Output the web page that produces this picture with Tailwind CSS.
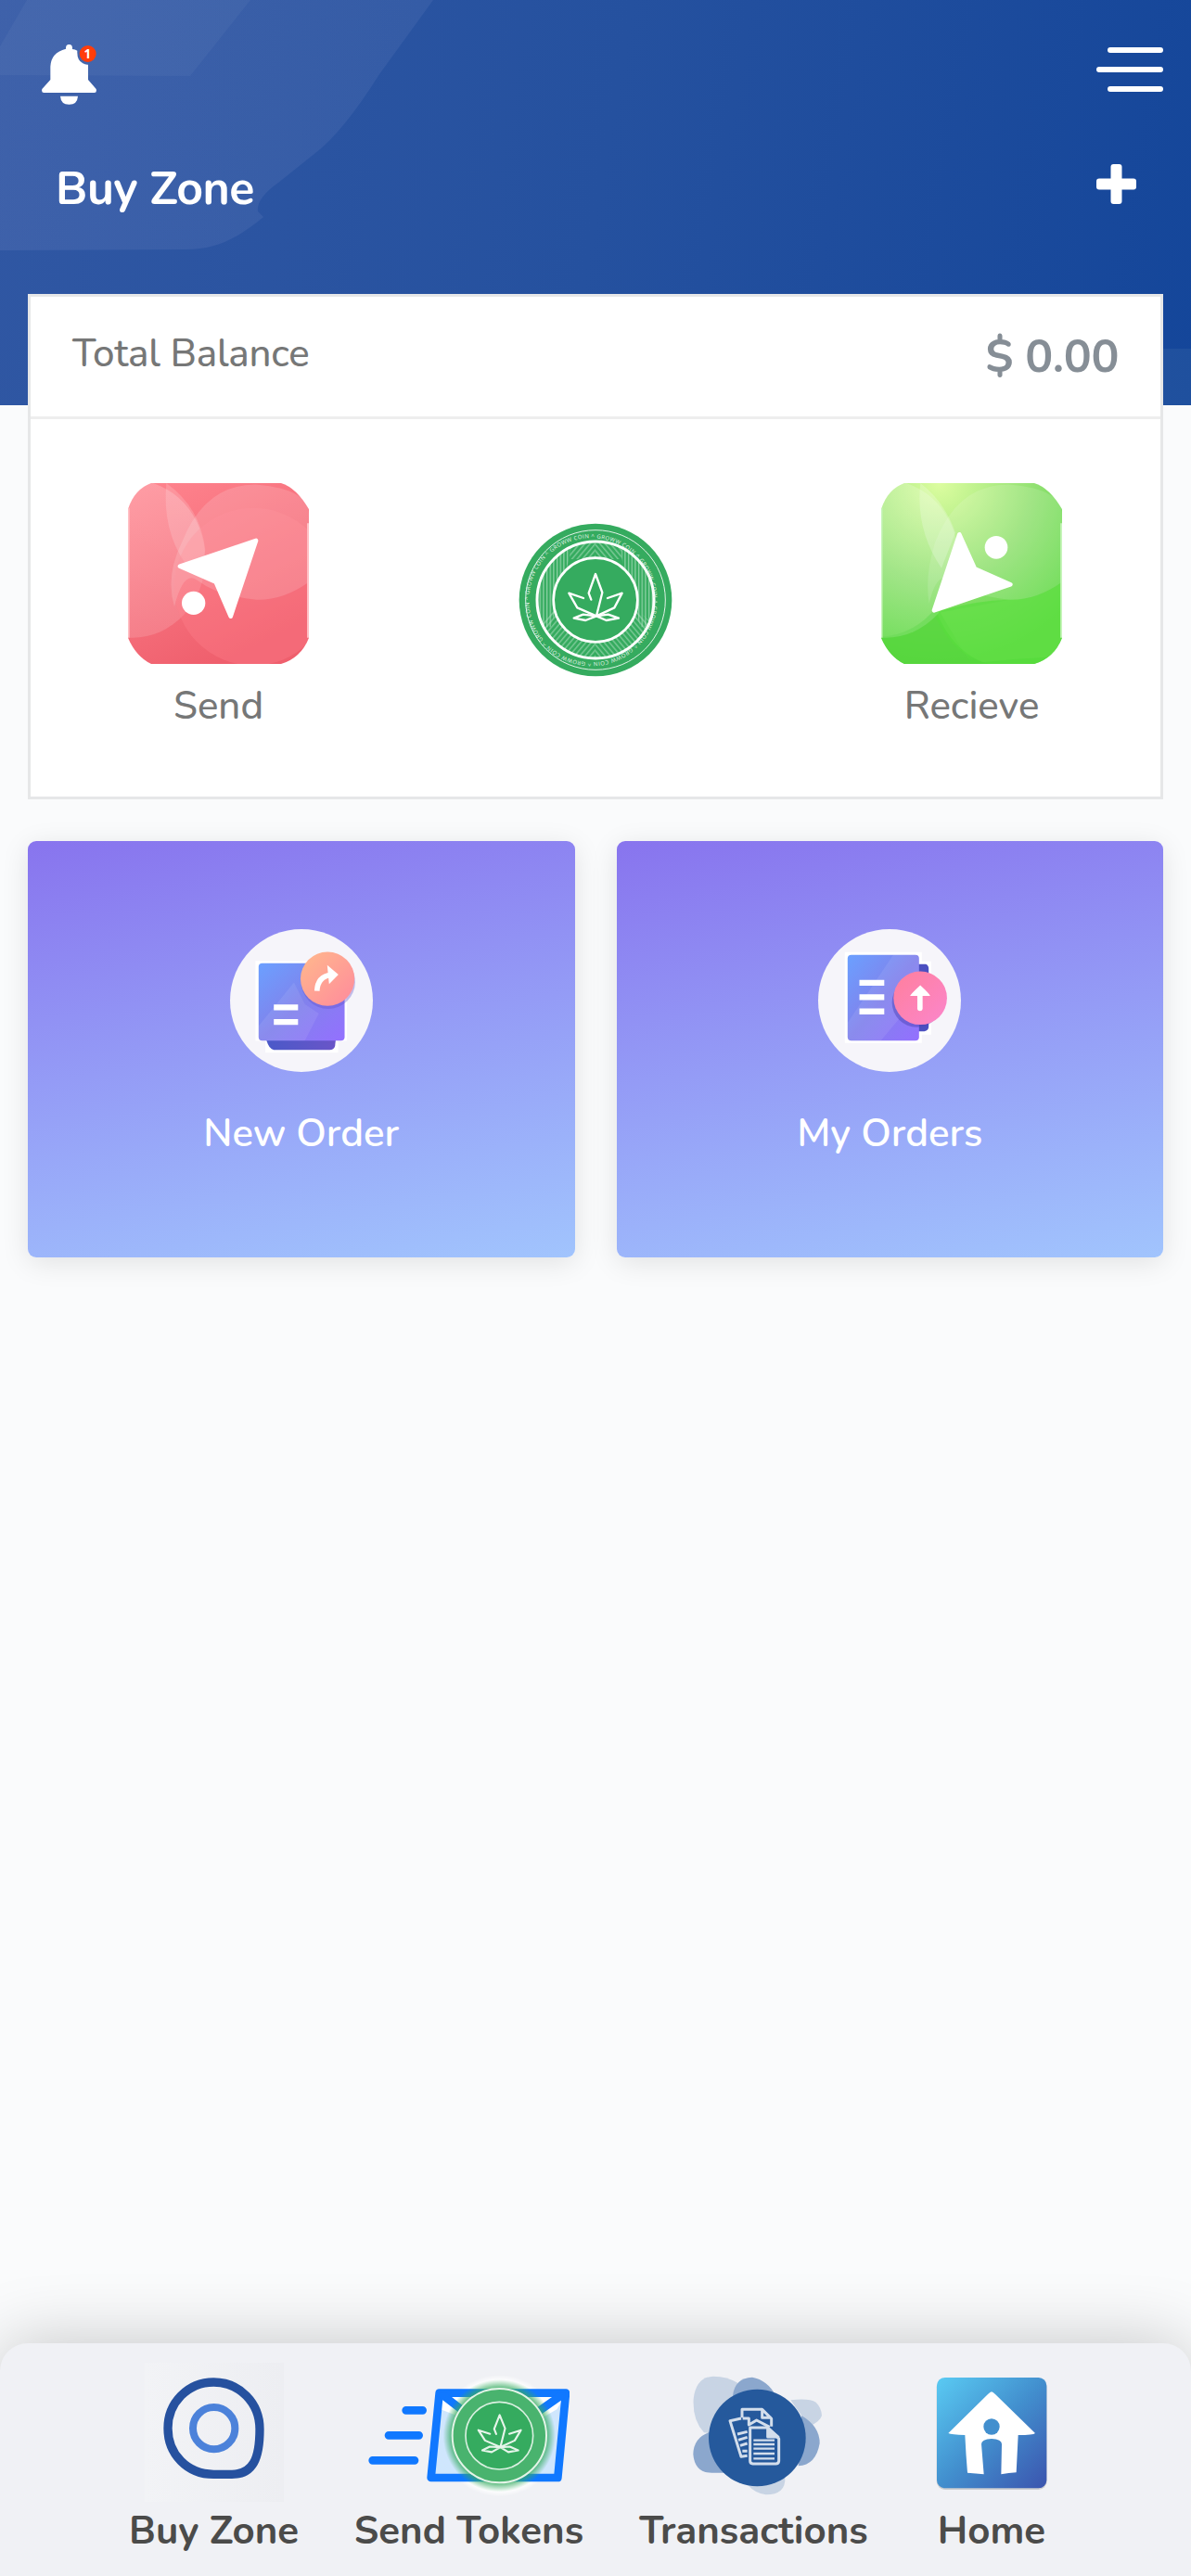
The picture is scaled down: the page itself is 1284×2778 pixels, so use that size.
<!DOCTYPE html>
<html lang="en">
<head>
    <meta charset="UTF-8">
    <meta name="viewport" content="width=device-width, initial-scale=1.0">
    <script src="https://cdn.jsdelivr.net/npm/@tailwindcss/browser@4"></script>
    <title>Buy Zone</title>
</head>
<body class="bg-[#fafbfc] font-['Nunito','Lato',sans-serif]">
<div class="w-[1284px] h-[2778px] flex flex-col overflow-hidden">

    <!-- Header -->
    <header class="relative h-[437px] shrink-0 bg-linear-100 from-[#3057a3] via-[#25519f] to-[#14469a]">
        <svg class="absolute inset-0" width="1284" height="437" viewBox="0 0 1284 437" fill="none">
            <defs>
                <linearGradient id="shape" x1="0" y1="0" x2="1" y2="0">
                    <stop offset="0" stop-color="#e4d8ff" stop-opacity=".08"/>
                    <stop offset="1" stop-color="#f0e8ff" stop-opacity=".06"/>
                </linearGradient>
            </defs>
            <path d="M0 0H467L409 80Q370 142 340 165L300 197Q276 214 278 228L284 234C255 258 232 269 200 269L0 270Z" fill="url(#shape)"/>
            <path d="M29 0H270L205 82L0 81V50Z" fill="#fff" fill-opacity=".04"/>
            <path d="M1150 376H1284V437H1150Z" fill="#3c6aa8" fill-opacity=".3"/>
        </svg>
        <div class="relative flex justify-between items-start pt-[48px] pl-[45px] pr-[30px]">
            <svg width="59" height="65" viewBox="75 54 177 195">
                <path fill="#fff" d="M153 68V64a10.500 10.500 0 0 1 21 0V69Q183 70 190 74Q188 105 208 115Q216 120 225 119V168L251 198Q254 210 245 210H82Q73 210 76 198L103 168V125Q105 80 153 68Z"/>
                <path fill="#fff" d="M135 221H192Q190 248 163.500 248.500Q137 248 135 221Z"/>
                <circle cx="224" cy="84" r="27" fill="#ff3d0a"/>
                <text x="223" y="98" text-anchor="middle" font-size="40" font-weight="700" fill="#fff" font-family="Open Sans">1</text>
            </svg>
            <div class="flex flex-col items-end gap-[15px] pt-[3px]">
                <span class="block w-[60px] h-[6px] rounded-full bg-white"></span>
                <span class="block w-[72px] h-[6px] rounded-full bg-white"></span>
                <span class="block w-[60px] h-[6px] rounded-full bg-white"></span>
            </div>
        </div>
        <div class="relative flex justify-between items-start pt-[60px] pl-[60px] pr-[59px]">
            <h1 class="mt-[1px] text-[50px] leading-[60px] tracking-[-0.5px] font-bold text-white whitespace-nowrap">Buy Zone</h1>
            <svg class="mt-[4px]" width="43" height="43" viewBox="0 0 43 43" fill="#fff">
                <rect x="15.500" width="12" height="43" rx="3"/>
                <rect y="15.500" width="43" height="12" rx="3"/>
            </svg>
        </div>
    </header>

    <!-- Balance -->
    <section class="relative -mt-[120px] mx-[30px] h-[545px] shrink-0 bg-white border-3 border-[#e6e7e8]">
        <div class="h-[132px] flex justify-between items-center px-[45px] border-b-3 border-[#eeeeee]">
            <span class="text-[42px] leading-[60px] tracking-[-0.2px] text-[#767777] font-medium -mt-[6px]">Total Balance</span>
            <span class="text-[50px] leading-[60px] tracking-[-0.4px] text-[#868e96] font-bold">$ 0.00</span>
        </div>
        <div class="flex justify-between items-start pl-[105px] pr-[106px] pt-[69px]">
            <div class="w-[195px] flex flex-col items-center">
                <svg width="195" height="195" viewBox="0 0 585 585">
                    <defs>
                        <clipPath id="tile"><path d="M75 0H495Q545 15 585 85V500Q560 565 495 585H75Q25 560 0 500V85Q20 20 75 0Z"/></clipPath>
                        <linearGradient id="pink" x1="0" y1="0" x2=".5" y2="1">
                            <stop offset="0" stop-color="#ff858f"/>
                            <stop offset="1" stop-color="#ef5f6d"/>
                        </linearGradient>
                        <linearGradient id="tint" x1="0" y1="0" x2="0" y2="1">
                            <stop offset="0" stop-color="#fff" stop-opacity=".2"/>
                            <stop offset="1" stop-color="#fff" stop-opacity=".14"/>
                        </linearGradient>
                    </defs>
                    <g clip-path="url(#tile)">
                        <rect width="585" height="585" fill="url(#pink)"/>
                        <ellipse cx="15" cy="245" rx="235" ry="255" fill="url(#tint)"/>
                        <path d="M124 0Q235 80 250 215Q240 275 185 260Q110 150 124 0Z" fill="#fff" fill-opacity=".16"/>
                        <circle cx="405" cy="335" r="255" fill="#ff828c" fill-opacity=".35"/>
                        <path d="M175 190Q250 0 420 5Q585 20 585 100V320Q500 380 415 377Q290 365 225 315Q180 280 150 400Q120 300 175 190Z" fill="#fff" fill-opacity=".15"/>
                        <path d="M0 80V500M584 130V500" stroke="#ffc0c5" stroke-width="10"/>
                    </g>
                    <path d="M168 269L414 186L332 431L284 320Z" fill="#fff" stroke="#fff" stroke-width="14" stroke-linejoin="round"/>
                    <circle cx="212" cy="388" r="38" fill="#fff"/>
                </svg>
                <span class="text-[42px] leading-[60px] mt-[16px] text-[#767777] font-medium">Send</span>
            </div>
            <svg class="mt-[43px]" width="166" height="166" viewBox="56 43 498 498" fill="none">
                <defs>
                    <pattern id="vlines" width="11" height="20" patternUnits="userSpaceOnUse"><path d="M5 0V20" stroke="#c4e8d0" stroke-width="2.500"/></pattern>
                    <pattern id="llines" width="13" height="20" patternUnits="userSpaceOnUse" patternTransform="rotate(40)"><path d="M5 0V20" stroke="#b4e0c3" stroke-width="2.500"/></pattern>
                    <pattern id="rlines" width="13" height="20" patternUnits="userSpaceOnUse" patternTransform="rotate(-40)"><path d="M5 0V20" stroke="#b4e0c3" stroke-width="2.500"/></pattern>
                    <clipPath id="band"><path clip-rule="evenodd" d="M112 292a193 193 0 1 0 386 0a193 193 0 1 0 -386 0ZM166 292a139 139 0 1 0 278 0a139 139 0 1 0 -278 0Z"/></clipPath>
                    <path id="rim" d="M291 91.500A201 201 0 1 1 290.900 91.500"/>
                </defs>
                <circle cx="305" cy="292" r="247" fill="#35ab5f"/>
                <g clip-path="url(#band)">
                    <path d="M110 90H222V150L160 380H110Z" fill="url(#vlines)"/>
                    <path d="M500 90H388V150L450 380H500Z" fill="url(#vlines)"/>
                    <path d="M222 90H305V160H222Z" fill="url(#llines)"/>
                    <path d="M388 90H305V160H388Z" fill="url(#rlines)"/>
                    <path d="M120 370L175 320L305 430V490H120Z" fill="url(#llines)"/>
                    <path d="M490 370L435 320L305 430V490H490Z" fill="url(#rlines)"/>
                </g>
                <circle cx="305" cy="292" r="226" stroke="#e2f3e8" stroke-width="3"/>
                <circle cx="305" cy="292" r="189" stroke="#fff" stroke-width="9"/>
                <circle cx="305" cy="292" r="136" fill="#35ab5f" stroke="#fff" stroke-width="8"/>
                <text font-family="Open Sans" font-size="18" fill="#e8f6ec"><textPath href="#rim" textLength="1255">^ GROWW COIN ^ GROWW COIN ^ GROWW COIN ^ GROWW COIN ^ GROWW COIN ^ GROWW COIN ^ GROWW COIN ^ GROWW COIN </textPath></text>
                <g stroke="#fff" stroke-width="7" stroke-linejoin="round" stroke-linecap="round">
                    <path d="M291 291L283 270L305 208L327 268L308 344L246 317L219 270L266 286M308 344L366 317L391 270L344 286"/>
                    <path d="M308 344L265 339L235 351L273 358L308 344L346 339L380 351L340 358L308 344"/>
                </g>
            </svg>
            <div class="w-[195px] flex flex-col items-center">
                <svg width="195" height="195" viewBox="0 0 585 585">
                    <defs>
                        <radialGradient id="lime" cx=".32" cy="0" r="1">
                            <stop offset="0" stop-color="#dcfda0"/>
                            <stop offset=".55" stop-color="#8fe070"/>
                            <stop offset="1" stop-color="#55d83c"/>
                        </radialGradient>
                    </defs>
                    <g clip-path="url(#tile)">
                        <rect width="585" height="585" fill="url(#lime)"/>
                        <path d="M0 498Q110 490 180 400L290 585H0Z" fill="#57d63e" fill-opacity=".8"/>
                        <path d="M170 420Q230 560 350 585H585V320Q500 380 415 377Q290 380 170 420Z" fill="#58dd3d" fill-opacity=".7"/>
                        <path d="M180 420Q230 540 330 580Q400 570 585 560V320Q500 380 415 377Z" fill="#8be86c" fill-opacity=".15"/>
                        <ellipse cx="15" cy="245" rx="235" ry="255" fill="url(#tint)"/>
                        <path d="M127 0Q205 60 240 160L195 275Q110 150 127 0Z" fill="#fff" fill-opacity=".22"/>
                        <path d="M175 190Q250 0 420 5Q585 20 585 100V320Q500 380 415 377Q290 365 225 315Q180 280 155 390Q140 300 175 190Z" fill="#fff" fill-opacity=".13"/>
                        <path d="M0 80V500M584 130V500" stroke="#c7f5bb" stroke-width="9"/>
                    </g>
                    <path d="M253 166L303 277L418 328L171 412Z" fill="#fff" stroke="#fff" stroke-width="14" stroke-linejoin="round"/>
                    <circle cx="372" cy="208" r="37" fill="#fff"/>
                </svg>
                <span class="text-[42px] leading-[60px] mt-[16px] text-[#767777] font-medium">Recieve</span>
            </div>
        </div>
    </section>

    <!-- Order tiles -->
    <section class="mt-[45px] mx-[30px] h-[449px] shrink-0 grid grid-cols-2 gap-[45px]">
        <div class="rounded-[9px] bg-linear-170 from-[#8874ee] to-[#a1c4fd] shadow-[0_6px_30px_rgba(0,0,0,0.1)] flex flex-col items-center pt-[94px]">
            <svg width="156" height="156" viewBox="141 125 466 466" fill="none">
                <defs>
                    <linearGradient id="doc" x1="0" y1="0" x2="1" y2="1">
                        <stop offset="0" stop-color="#6ba0ff"/>
                        <stop offset=".5" stop-color="#8182ec"/>
                        <stop offset="1" stop-color="#9470ff"/>
                    </linearGradient>
                    <linearGradient id="peach" x1="0" y1="0" x2="1" y2="1">
                        <stop offset="0" stop-color="#ffb98c"/>
                        <stop offset="1" stop-color="#ff8a9c"/>
                    </linearGradient>
                    <linearGradient id="base" x1="0" y1="0" x2="1" y2="0">
                        <stop offset="0" stop-color="#4a59c8"/>
                        <stop offset="1" stop-color="#6a55c8"/>
                    </linearGradient>
                </defs>
                <circle cx="374" cy="358" r="230" fill="#f6f5fa"/>
                <path d="M226 230H520V488H492V526H258V488H226Z" fill="#fff"/>
                <path d="M262 470H486L482 505Q478 517 465 517H285Q270 515 262 488Z" fill="url(#base)"/>
                <rect x="236" y="238" width="277" height="249" rx="12" fill="url(#doc)"/>
                <path d="M350 300L385 370L430 400L385 487H248Q236 485 236 470V440Z" fill="#fff" fill-opacity=".08"/>
                <circle cx="460" cy="298" r="87" fill="#5b4fc9" fill-opacity=".35"/>
                <circle cx="458" cy="288" r="87" fill="url(#peach)"/>
                <path d="M424 327Q426 280 470 275" stroke="#fff" stroke-width="17"/>
                <path d="M457 244L493 274L463 305Z" fill="#fff"/>
                <path d="M285 380H363M285 427H363" stroke="#fff" stroke-width="19"/>
            </svg>
            <span class="text-[42px] leading-[60px] mt-[36px] text-white font-semibold">New Order</span>
        </div>
        <div class="rounded-[9px] bg-linear-170 from-[#8874ee] to-[#a1c4fd] shadow-[0_6px_30px_rgba(0,0,0,0.1)] flex flex-col items-center pt-[94px]">
            <svg width="156" height="156" viewBox="155 125 466 466" fill="none">
                <defs>
                    <linearGradient id="rose" x1="0" y1="0" x2="1" y2="1">
                        <stop offset="0" stop-color="#ff7f9c"/>
                        <stop offset="1" stop-color="#fb86cc"/>
                    </linearGradient>
                </defs>
                <circle cx="388" cy="358" r="230" fill="#f6f5fa"/>
                <path d="M244 202H492V232H522V468H492V495H244Z" fill="#fff"/>
                <path d="M475 241H505Q514 245 514 256V442Q514 455 500 457H475Z" fill="#4b4fc0"/>
                <rect x="253" y="211" width="230" height="276" rx="12" fill="url(#doc)"/>
                <path d="M400 211L253 430V475Q253 487 266 487H360L483 340V225Q480 211 468 211Z" fill="#fff" fill-opacity=".08"/>
                <circle cx="476" cy="364" r="80" fill="#4e46b8" fill-opacity=".5"/>
                <circle cx="487" cy="350" r="86" fill="url(#rose)"/>
                <path d="M486 383V335" stroke="#fff" stroke-width="17" stroke-linecap="round"/>
                <path d="M454 343Q458 336 487 309Q516 336 519 343Z" fill="#fff"/>
                <path d="M291 301H371M291 347H371M291 393H371" stroke="#fff" stroke-width="19"/>
            </svg>
            <span class="text-[42px] leading-[60px] mt-[36px] text-white font-semibold">My Orders</span>
        </div>
    </section>

    <!-- Bottom nav -->
    <nav class="mt-auto h-[251px] shrink-0 rounded-t-[30px] bg-[#f0f1f5] shadow-[0_0_75px_rgba(0,0,0,0.22)] flex justify-center items-start gap-[61px] pr-[3px] text-[#4b4b4a] font-bold text-[42px] leading-[60px]">
        <a class="w-[182px] flex flex-col items-center pt-[21px]">
            <svg width="150" height="150" viewBox="468 205 450 450" fill="none">
                <defs>
                    <linearGradient id="plate" x1="0" y1="0" x2="1" y2="0">
                        <stop offset="0" stop-color="#f2f3f6"/>
                        <stop offset="1" stop-color="#edeef2"/>
                    </linearGradient>
                </defs>
                <rect x="468" y="205" width="450" height="450" fill="url(#plate)"/>
                <path d="M691 268C775 268 840 335 840 420C840 515 818 566 750 566H691C605 566 543 500 543 417C543 335 607 268 691 268Z" stroke="#26519f" stroke-width="28"/>
                <circle cx="692" cy="417" r="68" stroke="#4c82da" stroke-width="24"/>
            </svg>
            <span class="mt-[2px] whitespace-nowrap">Buy Zone</span>
        </a>
        <a class="w-[246px] flex flex-col items-center pt-[35px]">
            <svg width="217" height="130" viewBox="114 126 651 390" fill="none">
                <defs>
                    <radialGradient id="halo">
                        <stop offset=".82" stop-color="#35ab5f" stop-opacity=".9"/>
                        <stop offset="1" stop-color="#35ab5f" stop-opacity="0"/>
                    </radialGradient>
                    <radialGradient id="glow">
                        <stop offset=".9" stop-color="#fff"/>
                        <stop offset="1" stop-color="#fff" stop-opacity="0"/>
                    </radialGradient>
                    <clipPath id="env"><path d="M344 182H753L727 456H317Z"/></clipPath>
                </defs>
                <circle cx="538" cy="320" r="197" fill="url(#glow)"/>
                <path d="M344 182H753L727 456H317Z" fill="#cfe6fd"/>
                <path d="M352 192H750L724 235L680 260L540 330L400 255L348 235Z" fill="#fff"/>
                <g stroke="#1078ff" stroke-width="26" stroke-linecap="round" stroke-linejoin="round">
                    <path d="M344 182H753L727 456H317Z"/>
                    <path clip-path="url(#env)" d="M350 185L538 330L745 185"/>
                    <path d="M236 238H290M180 319H278M128 400H264"/>
                </g>
                <circle cx="538" cy="320" r="182" fill="url(#halo)"/>
                <circle cx="538" cy="320" r="152" fill="#49b36e" stroke="#e4f4e8" stroke-width="6"/>
                <circle cx="538" cy="320" r="109" fill="#35ab5f" stroke="#d9f0e0" stroke-width="5"/>
                <g transform="translate(295 82) scale(.8)" stroke="#e6f5ea" stroke-width="8" stroke-linejoin="round" stroke-linecap="round">
                    <path d="M291 291L283 270L305 214L327 268L308 344L246 317L219 275L266 290M308 344L366 317L391 275L344 290"/>
                    <path d="M308 344L265 342L235 357L273 364L308 344L346 342L380 357L340 364L308 344"/>
                </g>
            </svg>
            <span class="mt-[8px] whitespace-nowrap">Send Tokens</span>
        </a>
        <a class="w-[246px] flex flex-col items-center pt-[35px]">
            <svg class="ml-[9px]" width="140" height="130" viewBox="264 126 420 390" fill="none">
                <path d="M300 310Q262 270 266 200Q275 130 330 128Q375 128 410 150L500 250L400 320Z" fill="#c8d4e4"/>
                <path d="M580 205Q640 198 662 212Q680 230 681 255Q675 275 640 290Z" fill="#c8d4e4"/>
                <path d="M440 478L562 455Q565 510 500 511Q465 507 440 478Z" fill="#c8d4e4"/>
                <path d="M393 190Q400 133 456 131Q505 140 532 190L460 260Z" fill="#8ba7cd"/>
                <path d="M330 305Q266 320 265 380Q270 440 325 440H380Z" fill="#8ba7cd"/>
                <path d="M615 255Q675 290 674 345Q662 415 605 418Z" fill="#8ba7cd"/>
                <circle cx="472" cy="327" r="157" fill="#25599c"/>
                <g stroke="#d3deec" stroke-width="9" stroke-linejoin="round">
                    <path d="M440 385L420 388L384 272L420 264M423 262V235H488L518 265V290M488 235V262H518"/>
                    <path d="M425 264H445V285L470 270L512 292M408 315L440 307M411 334L440 325M417 352L440 345M424 370H440"/>
                    <path d="M449 294H506L542 330V402Q541 411 532 411H458Q449 410 449 402Z" fill="#25599c"/>
                    <path d="M506 294V324H540Z" fill="#d3deec"/>
                    <path d="M460 335H528M460 348H528M460 362H528M460 378H528M460 394H528" stroke-width="7"/>
                </g>
            </svg>
            <span class="mt-[8px] whitespace-nowrap">Transactions</span>
        </a>
        <a class="w-[145px] flex flex-col items-center pt-[35px]">
            <svg width="128" height="130" viewBox="138 184 384 390" fill="none">
                <defs>
                    <linearGradient id="sky" x1="0" y1="0" x2="1" y2="1">
                        <stop offset="0" stop-color="#5acbf3"/>
                        <stop offset=".5" stop-color="#428fce"/>
                        <stop offset="1" stop-color="#3b54ae"/>
                    </linearGradient>
                </defs>
                <rect x="152" y="193" width="357" height="360" rx="28" fill="#000" fill-opacity=".15"/>
                <rect x="153" y="190" width="355" height="358" rx="26" fill="url(#sky)"/>
                <path fill="#fff" d="M330 236Q334 236 342 244L471 370Q465 376 416 376L410 497Q385 498 361 503L363 405Q363 390 330 388Q297 390 297 405L305 503Q280 500 252 498Q247 440 244 376Q200 375 190 370L318 244Q326 236 330 236Z"/>
                <circle cx="330" cy="349" r="26" fill="#428fce"/>
            </svg>
            <span class="mt-[8px] whitespace-nowrap">Home</span>
        </a>
    </nav>
</div>
</body>
</html>
